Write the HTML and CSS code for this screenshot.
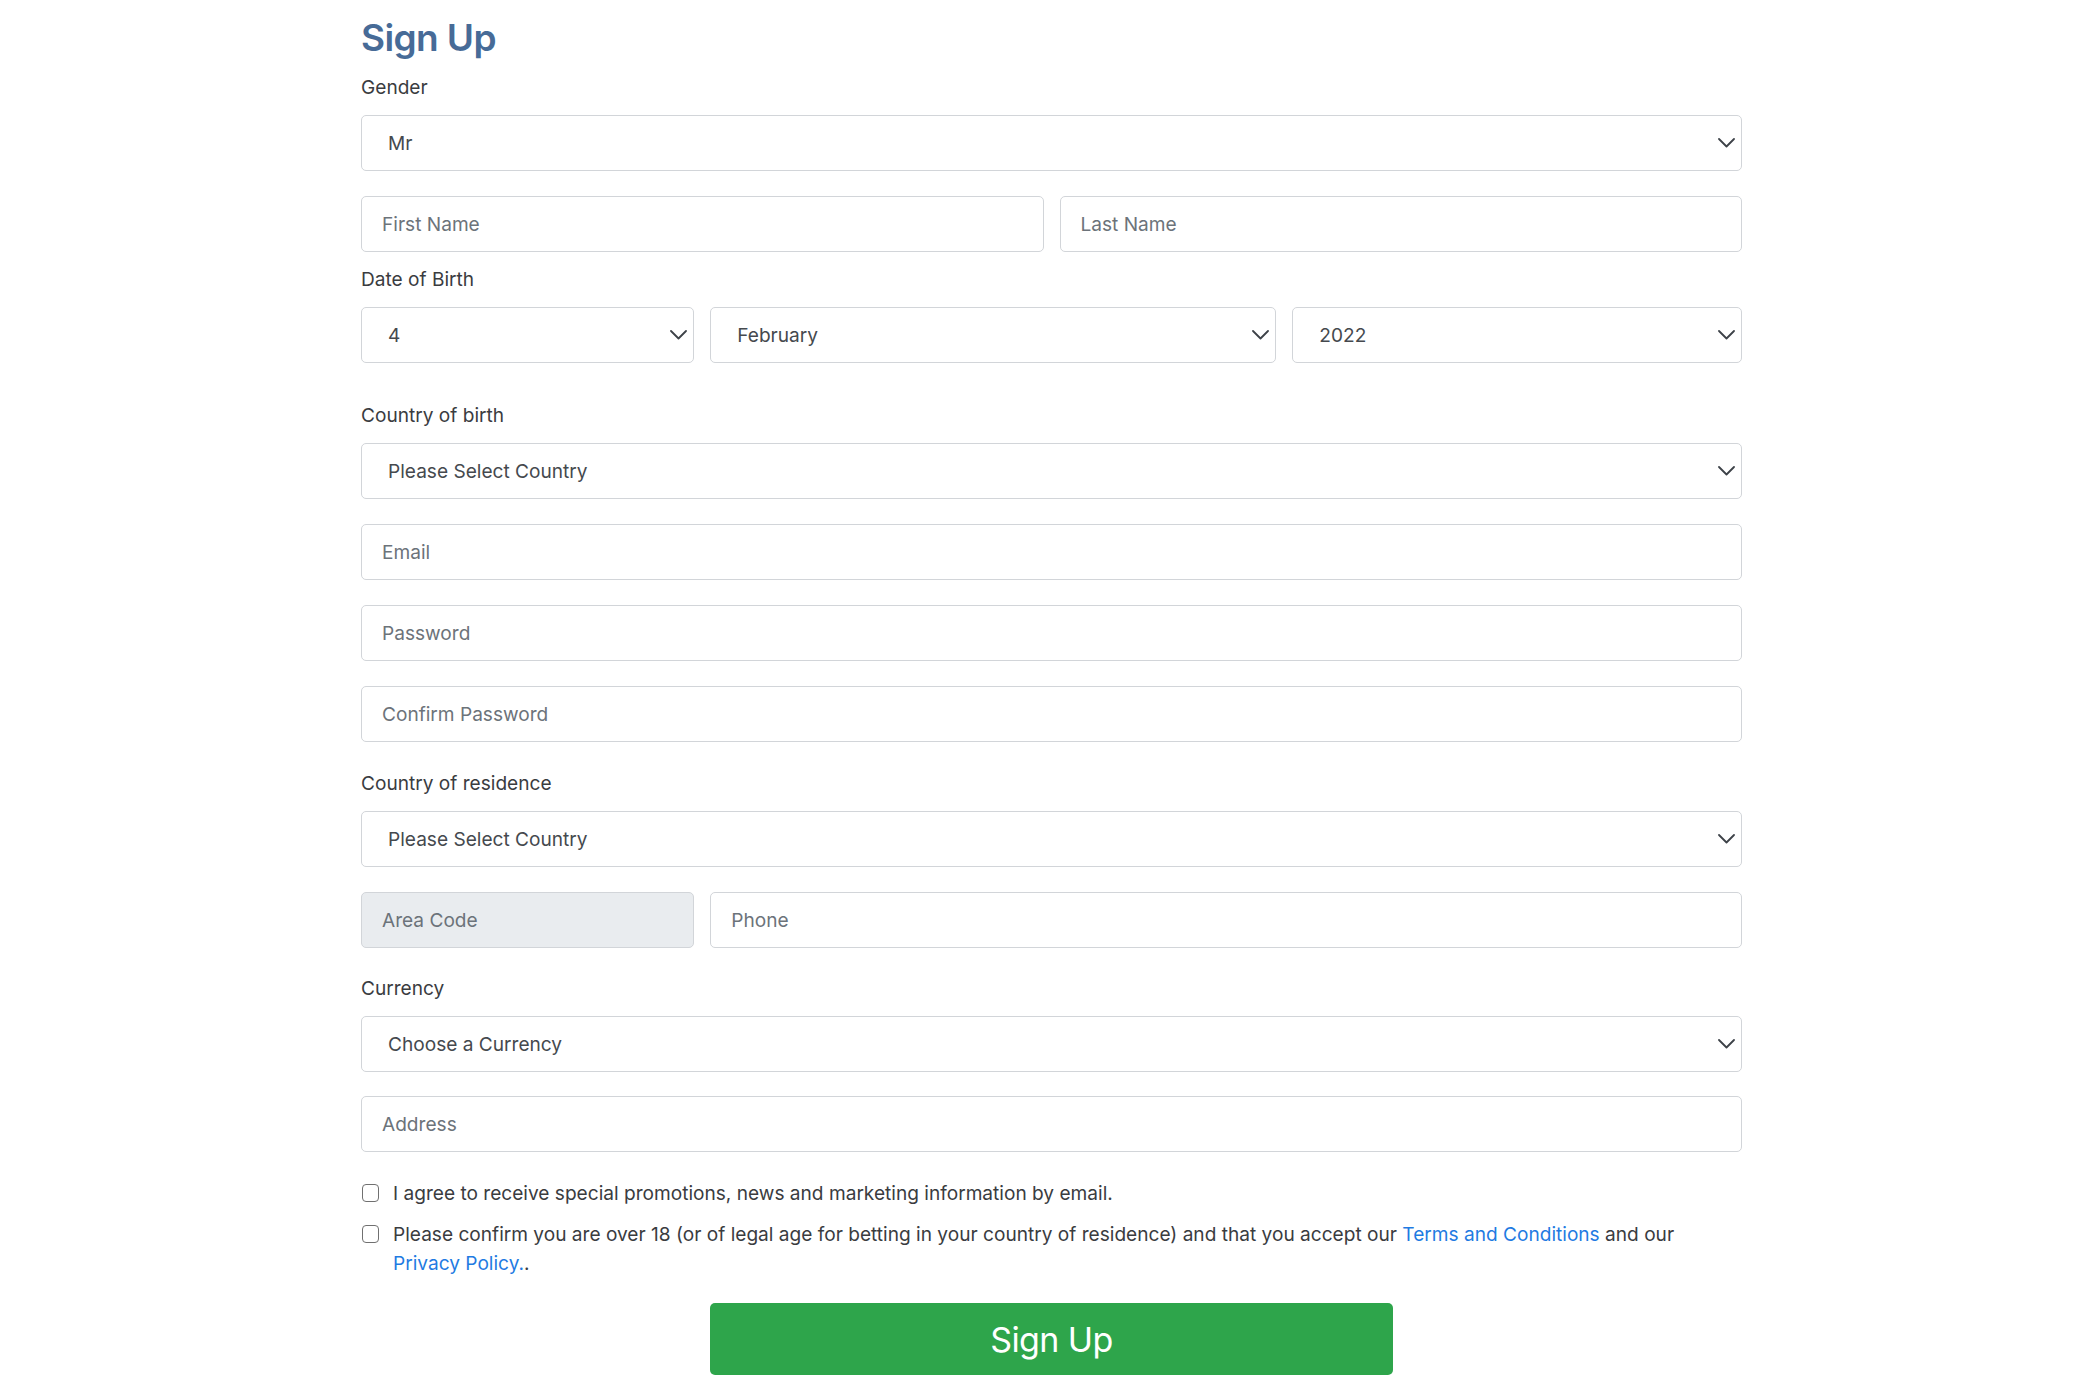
FILE: index.html
```html
<!DOCTYPE html>
<html lang="en">
<head>
<meta charset="utf-8">
<title>Sign Up</title>
<link rel="stylesheet" href="styles.css">
</head>
<body>
<div class="page">
  <h1 class="title">Sign Up</h1>
  <form class="form">
    <div class="field">
      <label class="label">Gender</label>
      <div class="select-wrap">
        <select class="control select"><option>Mr</option><option>Mrs</option><option>Ms</option></select>
        <svg class="chev" viewBox="0 0 17 10" width="17" height="10"><path d="M1 1l7.5 7.5L16 1"/></svg>
      </div>
    </div>

    <div class="field grid two tight">
      <input class="control" type="text" placeholder="First Name">
      <input class="control" type="text" placeholder="Last Name">
    </div>

    <div class="field big-gap">
      <label class="label">Date of Birth</label>
      <div class="grid dob">
        <div class="select-wrap">
          <select class="control select"><option>4</option></select>
          <svg class="chev" viewBox="0 0 17 10" width="17" height="10"><path d="M1 1l7.5 7.5L16 1"/></svg>
        </div>
        <div class="select-wrap">
          <select class="control select"><option>February</option></select>
          <svg class="chev" viewBox="0 0 17 10" width="17" height="10"><path d="M1 1l7.5 7.5L16 1"/></svg>
        </div>
        <div class="select-wrap">
          <select class="control select"><option>2022</option></select>
          <svg class="chev" viewBox="0 0 17 10" width="17" height="10"><path d="M1 1l7.5 7.5L16 1"/></svg>
        </div>
      </div>
    </div>

    <div class="field">
      <label class="label">Country of birth</label>
      <div class="select-wrap">
        <select class="control select"><option>Please Select Country</option></select>
        <svg class="chev" viewBox="0 0 17 10" width="17" height="10"><path d="M1 1l7.5 7.5L16 1"/></svg>
      </div>
    </div>

    <div class="field">
      <input class="control" type="email" placeholder="Email">
    </div>
    <div class="field">
      <input class="control" type="password" placeholder="Password">
    </div>
    <div class="field gap26">
      <input class="control" type="password" placeholder="Confirm Password">
    </div>

    <div class="field">
      <label class="label">Country of residence</label>
      <div class="select-wrap">
        <select class="control select"><option>Please Select Country</option></select>
        <svg class="chev" viewBox="0 0 17 10" width="17" height="10"><path d="M1 1l7.5 7.5L16 1"/></svg>
      </div>
    </div>

    <div class="field grid phone">
      <input class="control" type="text" placeholder="Area Code" disabled>
      <input class="control" type="tel" placeholder="Phone">
    </div>

    <div class="field gap24">
      <label class="label">Currency</label>
      <div class="select-wrap">
        <select class="control select"><option>Choose a Currency</option></select>
        <svg class="chev" viewBox="0 0 17 10" width="17" height="10"><path d="M1 1l7.5 7.5L16 1"/></svg>
      </div>
    </div>

    <div class="field gap27">
      <input class="control" type="text" placeholder="Address">
    </div>

    <label class="check first">
      <input class="box" type="checkbox">
      <span>I agree to receive special promotions, news and marketing information by email.</span>
    </label>
    <label class="check">
      <input class="box" type="checkbox">
      <span>Please confirm you are over 18 (or of legal age for betting in your country of residence) and that you accept our <a class="link" href="#">Terms and Conditions</a> and our<br><a class="link" href="#">Privacy Policy.</a>.</span>
    </label>

    <div class="actions">
      <button class="submit" type="button">Sign Up</button>
    </div>
  </form>
</div>
</body>
</html>
```

FILE: styles.css
```css
* { box-sizing: border-box; }

html, body {
  margin: 0;
  padding: 0;
  background: #ffffff;
}

body {
  font-family: Inter, "Liberation Sans", Arial, sans-serif;
  font-size: 19.1px;
  color: #3a3c3f;
}

.page {
  width: 1381px;
  margin-left: 361px;
  padding-top: 14px;
}

.title {
  margin: 0 0 10px 0;
  font-size: 37px;
  line-height: 48px;
  font-weight: 600;
  color: #476b97;
  letter-spacing: -0.6px;
}

.form { margin: 0; }

.field { margin-bottom: 25px; }
.field.tight { margin-bottom: 12px; }
.field.big-gap { margin-bottom: 37px; }
.field.gap24 { margin-bottom: 24px; }
.field.gap26 { margin-bottom: 26px; }
.field.gap27 { margin-bottom: 27px; }

.label {
  display: block;
  line-height: 30px;
  margin-bottom: 13px;
  font-size: 19.1px;
  color: #3a3c3f;
}

.grid { display: grid; column-gap: 16px; }
.grid.two { grid-template-columns: 1fr 1fr; }
.grid.dob {
  grid-template-columns: calc((100% + 16px) / 4 - 16px) calc((100% + 16px) * 5 / 12 - 16px) 1fr;
}
.grid.phone {
  grid-template-columns: calc((100% + 16px) / 4 - 16px) 1fr;
}

.control {
  display: block;
  width: 100%;
  height: 56px;
  margin: 0;
  padding: 0 20px;
  font-family: inherit;
  font-size: 19.1px;
  color: #495057;
  background: #ffffff;
  border: 1px solid #d2d5d9;
  border-radius: 5px;
  outline: none;
}

.control::placeholder { color: #6c737a; opacity: 1; }

.control:disabled {
  background: #e9ecef;
  border-color: #d2d5d9;
}

.select-wrap { position: relative; }

.select {
  -webkit-appearance: none;
  appearance: none;
  padding: 0 40px 0 26px;
  color: #45494e;
}

.chev {
  position: absolute;
  right: 7px;
  top: 50%;
  margin-top: -5px;
  pointer-events: none;
}
.chev path {
  fill: none;
  stroke: #3d4248;
  stroke-width: 1.8;
  stroke-linecap: round;
  stroke-linejoin: round;
}

.check {
  display: flex;
  align-items: flex-start;
  gap: 14px;
  line-height: 29px;
  font-size: 19.1px;
  color: #3a3c3f;
}
.check.first { margin-bottom: 12px; }

.box {
  -webkit-appearance: none;
  appearance: none;
  flex: none;
  width: 17px;
  height: 18px;
  margin: 5px 0 0 1px;
  border: 1.5px solid #707070;
  border-radius: 4px;
  background: #ffffff;
}

.link {
  color: #1f7be2;
  text-decoration: none;
}

.actions {
  display: flex;
  justify-content: center;
  margin-top: 25px;
}

.submit {
  width: calc((100% + 16px) / 2 - 16px);
  height: 72px;
  border: none;
  border-radius: 5px;
  background: #2ea54b;
  color: #ffffff;
  font-family: inherit;
  font-size: 34px;
  font-weight: 400;
  letter-spacing: -0.6px;
}
```
